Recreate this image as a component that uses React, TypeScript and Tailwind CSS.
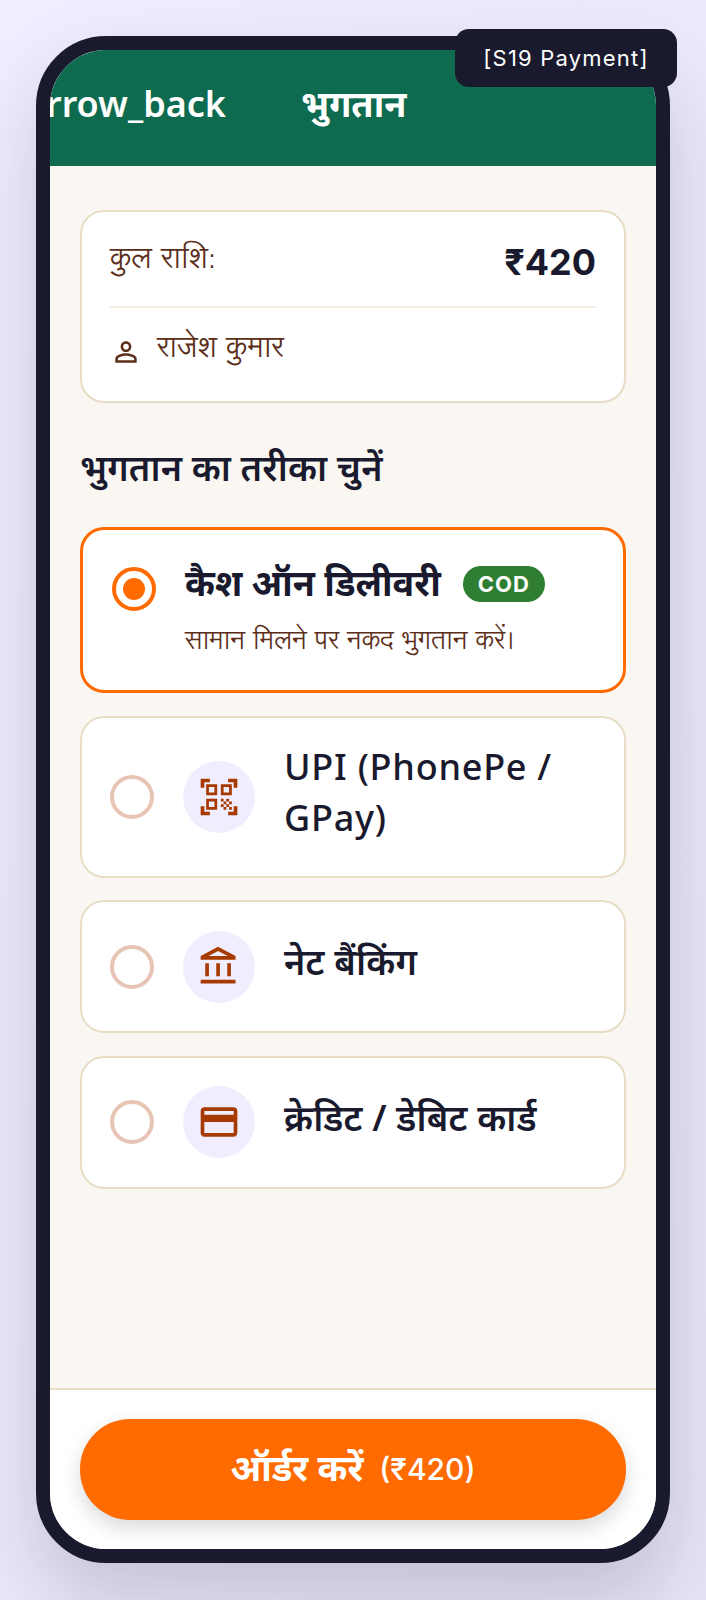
import { MdOutlineAccountBalance, MdOutlineCreditCard, MdPersonOutline, MdQrCodeScanner } from 'react-icons/md';
import type { ReactNode } from 'react';

const NOTO = "font-['Noto_Sans','Open_Sans',sans-serif]";
const INTER = "font-['Inter',sans-serif]";
const LOHIT = "font-['Lohit_Devanagari','Noto_Sans',sans-serif]";

function Radio({ selected }: { selected?: boolean }) {
  if (selected) {
    return (
      <div className="w-[44px] h-[44px] mt-[9px] shrink-0 rounded-full border-[4px] border-[#ff6b00] flex items-center justify-center">
        <div className="w-[22px] h-[22px] rounded-full bg-[#ff6b00]" />
      </div>
    );
  }
  return <div className="w-[44px] h-[44px] shrink-0 rounded-full border-[4px] border-[#e8c4b4]" />;
}

function PayOption({ icon, children, latin }: { icon: ReactNode; children: ReactNode; latin?: boolean }) {
  return (
    <div className="flex items-center gap-[29px] rounded-[24px] border-2 border-[#e8dcc4] bg-white px-[28px] py-[28.5px]">
      <Radio />
      <div className="flex items-center gap-[29px]">
        <div className="w-[72px] h-[72px] shrink-0 rounded-full bg-[#f0edff] flex items-center justify-center text-[#a63a00]">
          {icon}
        </div>
        <div className={`text-[36px] leading-[1.4] text-[#1a1a2e] -translate-y-[4px] ${latin ? 'font-medium tracking-[0.75px]' : 'font-semibold tracking-[0.2px]'}`}>
          {children}
        </div>
      </div>
    </div>
  );
}

export default function App() {
  return (
    <div className={`min-h-[1600px] w-[706px] p-[36px] bg-gradient-to-br from-[#f0edff] to-[#e8e4f8] ${NOTO}`}>
      <div className="relative w-[634px] h-[1527px]">
        {/* debug label */}
        <div className={`absolute -top-[7px] -right-[7px] z-10 w-[222px] h-[58px] rounded-[14px] bg-[#1a1a2e] text-white ${INTER} text-[22px] tracking-[1.2px] flex items-center justify-center`}>
          [S19 Payment]
        </div>

        <div className="w-full h-full rounded-[70px] border-[14px] border-[#1a1a2e] overflow-hidden flex flex-col bg-[#faf7f2] shadow-[0_40px_80px_rgba(26,26,46,0.18)]">
          <header className="h-[116px] shrink-0 bg-[#0f6b4f] text-white flex items-center overflow-hidden">
            <span className="text-[36px] font-semibold whitespace-nowrap -ml-[25px] -mt-[8px]">arrow_back</span>
            <h1 className="text-[36px] font-bold ml-[75px] -mt-[8px]">भुगतान</h1>
          </header>

          <main className="flex-1 px-[30px] pt-[44px]">
            <section className="rounded-[24px] border-2 border-[#e8dcc4] bg-white px-[28px] pt-[28px] pb-[34px]">
              <div className="flex items-start justify-between border-b-2 border-[#f5ebe0] pb-[22px]">
                <span className={`${LOHIT} text-[29.2px] leading-[40px] text-[#5c2e1a]`}>कुल राशि:</span>
                <span className={`${INTER} text-[36px] leading-[44px] font-bold text-[#1a1a2e]`}>₹420</span>
              </div>
              <div className="flex items-center gap-[15px] mt-[19px] h-[40px]">
                <MdPersonOutline size={32} className="text-[#5c2e1a] translate-y-[5px]" />
                <span className={`${LOHIT} text-[29.2px] leading-[40px] pt-[4px] text-[#5c2e1a]`}>राजेश कुमार</span>
              </div>
            </section>

            <h2 className="mt-[40px] text-[36px] leading-[1.4] font-semibold tracking-[0.15px] text-[#1a1a2e]">भुगतान का तरीका चुनें</h2>

            <div className="mt-[34px] flex flex-col gap-[22.5px]">
              <div className="flex items-start gap-[29px] rounded-[24px] border-[3px] border-[#ff6b00] bg-white pt-[28px] pb-[25px] pl-[29px] pr-[28px]">
                <Radio selected />
                <div>
                  <div className="flex items-center gap-[22px]">
                    <span className="text-[36px] leading-[50px] font-bold text-[#1a1a2e]">कैश ऑन डिलीवरी</span>
                    <span className={`rounded-full bg-[#2e7d32] text-white ${INTER} text-[22px] leading-[36px] font-bold tracking-[1px] px-[15px] translate-y-[1px]`}>COD</span>
                  </div>
                  <p className={`mt-[11px] ${LOHIT} text-[25.6px] leading-[46px] text-[#5c2e1a]`}>सामान मिलने पर नकद भुगतान करें।</p>
                </div>
              </div>

              <PayOption latin icon={<MdQrCodeScanner size={44} />}>UPI (PhonePe / GPay)</PayOption>
              <PayOption icon={<MdOutlineAccountBalance size={44} />}>नेट बैंकिंग</PayOption>
              <PayOption icon={<MdOutlineCreditCard size={44} />}>क्रेडिट / डेबिट कार्ड</PayOption>
            </div>
          </main>

          <footer className="shrink-0 border-t-2 border-[#e8dcc4] bg-white px-[30px] pt-[29px] pb-[29px]">
            <button className="w-full h-[101px] rounded-[50px] bg-[#ff6b00] text-white flex items-center justify-center gap-[16px] shadow-[0_8px_20px_rgba(0,0,0,0.15)]">
              <span className="text-[36px] font-bold -mt-[4px]">ऑर्डर करें</span>
              <span className={`${INTER} text-[30px] font-medium`}>(₹420)</span>
            </button>
          </footer>
        </div>
      </div>
    </div>
  );
}
